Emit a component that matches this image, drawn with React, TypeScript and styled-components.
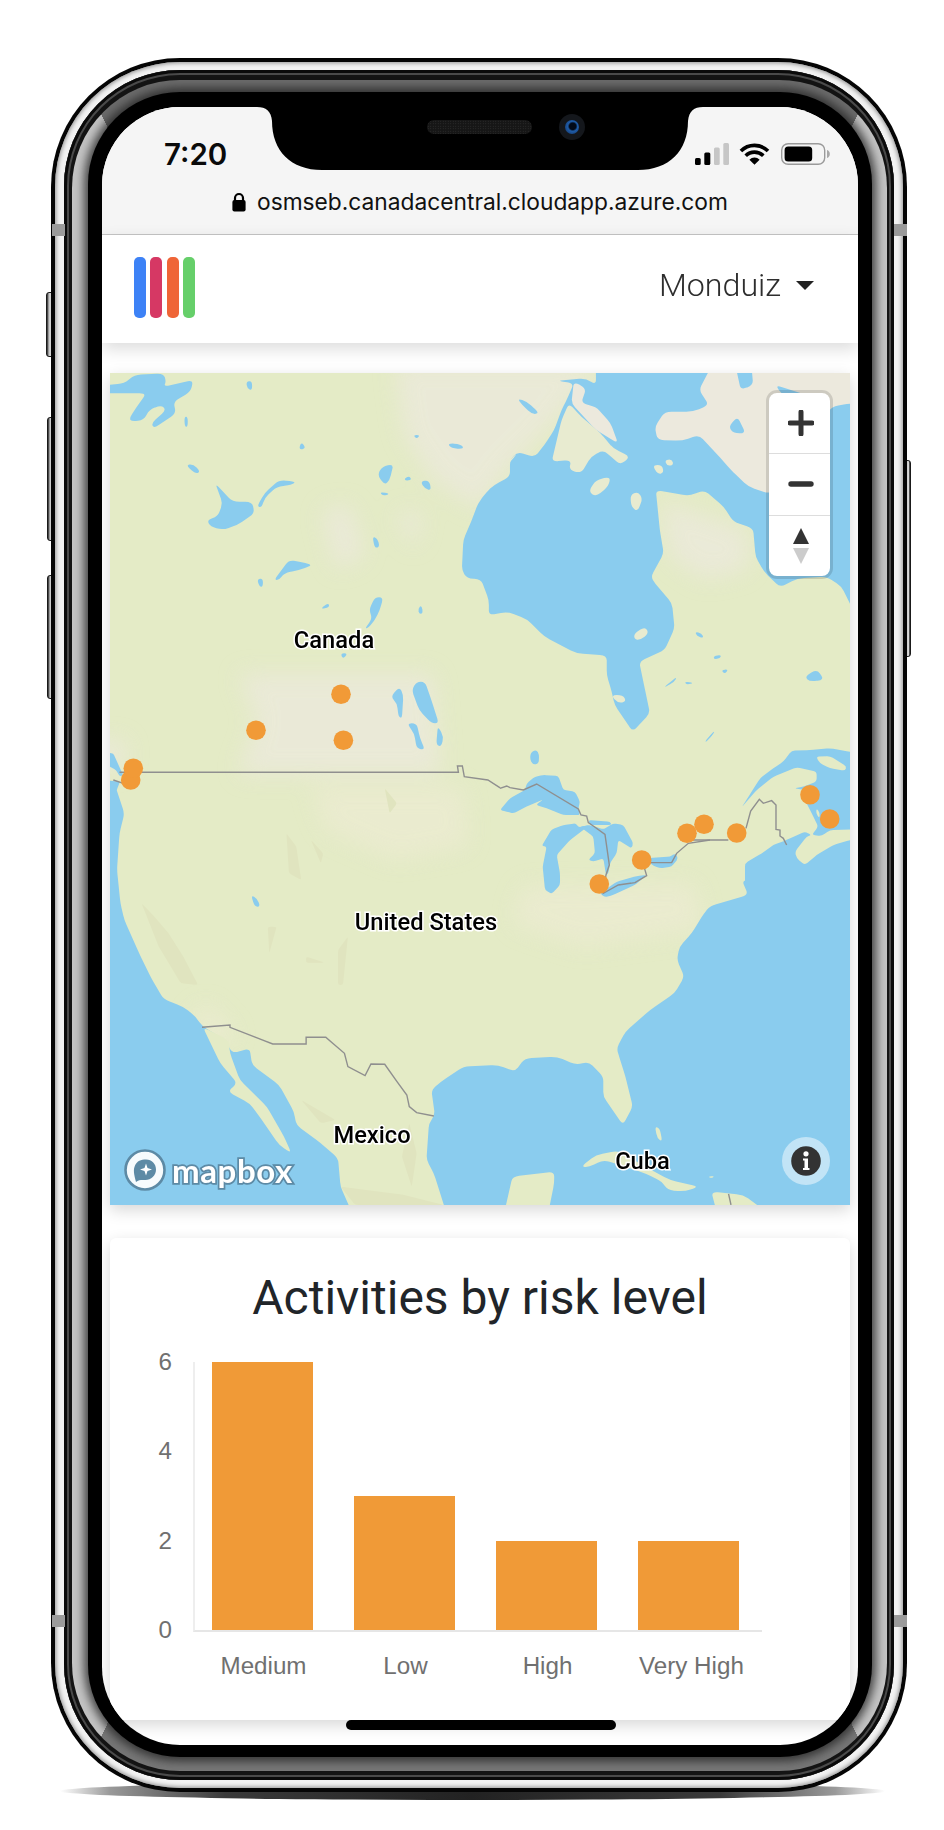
import React from "react";
import styled, { createGlobalStyle } from "styled-components";

const Global = createGlobalStyle`
  * { box-sizing: border-box; }
  html, body { margin: 0; padding: 0; background: #fff; }
  body { font-family: Roboto, "Liberation Sans", sans-serif; }
`;

const Page = styled.div`
  width: 944px;
  height: 1830px;
  padding: 58px 0 0 51px;
  overflow: hidden;
  background: #fff;
`;

const Device = styled.div`
  position: relative;
  width: 856px;
  height: 1734px;
`;

const GroundShadow = styled.div`
  position: absolute;
  left: 9px;
  right: 22px;
  bottom: -8px;
  height: 18px;
  border-radius: 50%;
  background: linear-gradient(90deg, rgba(255, 255, 255, 0) 0%, #9a9a9a 6%, #3a3a3a 20%, #222 50%, #3a3a3a 80%, #9a9a9a 94%, rgba(255, 255, 255, 0) 100%);
`;

const SideButton = styled.div<{ $left: number; $top: number; $w: number; $h: number }>`
  position: absolute;
  left: ${(p) => p.$left}px;
  top: ${(p) => p.$top}px;
  width: ${(p) => p.$w}px;
  height: ${(p) => p.$h}px;
  border-radius: 3px;
  background: linear-gradient(90deg, #222 0%, #c8c8c8 35%, #d8d8d8 70%, #111 100%);
  border: 1px solid #1a1a1a;
`;

const Antenna = styled.div<{ $left: number; $top: number }>`
  position: absolute;
  z-index: 3;
  left: ${(p) => p.$left}px;
  top: ${(p) => p.$top}px;
  width: 13px;
  height: 12px;
  background: #9a9a9a;
`;

const Shell = styled.div`
  position: relative;
  width: 100%;
  height: 100%;
  padding: 3.5px 4px 4px;
  border-radius: 129px;
  background: #050505;
`;

const Silver = styled.div`
  height: 100%;
  padding: 8.5px 9px;
  border-radius: 125px;
  background: #f2f2f2;
  box-shadow: inset 0 0 4px 1px #8f8f8f;
`;

const DarkRing = styled.div`
  height: 100%;
  padding: 10px 7.5px 9px;
  border-radius: 116px;
  background: #141414;
  box-shadow: inset 0 0 0 3px #0a0a0a, inset 0 0 0 5px #4a4a4a;
`;

const Band = styled.div`
  height: 100%;
  padding: 12px 15px 14px 16.5px;
  border-radius: 108px;
  background: conic-gradient(
    #6c6c6c 0deg 25deg,
    #c4c4c4 25deg 155deg,
    #777 155deg 205deg,
    #c4c4c4 205deg 335deg,
    #6c6c6c 335deg 360deg
  );
`;

const Bezel = styled.div`
  height: 100%;
  padding: 15px 13.5px 12px 14px;
  border-radius: 92px;
  background: #000;
  box-shadow: 0 0 10px 4px rgba(35, 35, 35, 0.8);
`;

const Screen = styled.div`
  position: relative;
  height: 100%;
  border-radius: 78px;
  overflow: hidden;
  background: #fff;
`;

const Notch = styled.svg`
  position: absolute;
  z-index: 5;
  left: 155px;
  top: 0;
`;

const Speaker = styled.div`
  position: absolute;
  z-index: 6;
  left: 325px;
  top: 13px;
  width: 105px;
  height: 14px;
  border-radius: 7px;
  background-color: #161616;
  background-image: radial-gradient(#333 0.7px, transparent 0.8px);
  background-size: 2.5px 2.5px;
`;

const Camera = styled.div`
  position: absolute;
  z-index: 6;
  left: 457px;
  top: 7px;
  width: 26px;
  height: 26px;
  border-radius: 50%;
  background: #14171c;
  display: flex;
  align-items: center;
  justify-content: center;
`;

const Lens = styled.div`
  width: 14px;
  height: 14px;
  border-radius: 50%;
  background: radial-gradient(circle at 55% 45%, #020a18 0 30%, #1f5ca8 45%, #12305c 100%);
`;

const HomeBar = styled.div`
  position: absolute;
  z-index: 6;
  left: 244px;
  bottom: 15px;
  width: 270px;
  height: 10px;
  border-radius: 5px;
  background: #000;
`;

const Browser = styled.div`
  height: 128px;
  background: #f5f5f5;
  border-bottom: 1px solid #c6c6c6;
`;

const StatusRow = styled.div`
  height: 64px;
  padding: 30px 28px 0 62px;
  display: flex;
  align-items: center;
  justify-content: space-between;
`;

const Clock = styled.span`
  font-family: Inter, sans-serif;
  font-weight: 600;
  font-size: 29.5px;
  line-height: 34px;
  color: #0a0a0a;
`;

const StatusIcons = styled.div`
  display: flex;
  align-items: center;
  gap: 10.6px;
`;

const UrlRow = styled.div`
  height: 62px;
  display: flex;
  align-items: center;
  padding-left: 130px;
  gap: 11px;
`;

const UrlText = styled.span`
  font-family: Inter, sans-serif;
  font-size: 22.75px;
  font-weight: 400;
  line-height: 28px;
  color: #111;
  white-space: nowrap;
`;

const Navbar = styled.header`
  position: relative;
  z-index: 2;
  height: 108px;
  padding: 0 44px 3px 32px;
  display: flex;
  align-items: center;
  justify-content: space-between;
  background: #fff;
  box-shadow: 0 6px 16px rgba(0, 0, 0, 0.14);
`;

const Logo = styled.div`
  display: flex;
  gap: 4.4px;
`;

const LogoBar = styled.span<{ $c: string }>`
  width: 12px;
  height: 61px;
  border-radius: 5px;
  background: ${(p) => p.$c};
`;

const UserMenu = styled.div`
  display: flex;
  align-items: center;
  gap: 15px;
  padding-bottom: 5px;
  font-weight: 300;
  font-size: 32.2px;
  line-height: 40px;
  color: #2e2e2e;
`;

const Caret = styled.span`
  width: 0;
  height: 0;
  border-left: 9px solid transparent;
  border-right: 9px solid transparent;
  border-top: 9.5px solid #222;
`;

const Main = styled.main`
  padding: 30px 8px 0;
  display: flex;
  flex-direction: column;
  gap: 32.5px;
`;

const MapPanel = styled.section`
  position: relative;
  width: 740px;
  height: 832px;
  background: #e4ebc6;
  box-shadow: 0 5px 15px rgba(0, 0, 0, 0.16);
`;

const MapSvg = styled.svg`
  display: block;
`;

const PlaceLabel = styled.span<{ $x: number; $y: number }>`
  position: absolute;
  left: ${(p) => p.$x}px;
  top: ${(p) => p.$y}px;
  transform: translate(-50%, -50%);
  font-family: Roboto, sans-serif;
  font-weight: 500;
  font-size: 23.7px;
  line-height: 26px;
  color: #000;
  white-space: nowrap;
  -webkit-text-stroke: 3px #fff;
  paint-order: stroke fill;
`;

const ZoomControl = styled.div`
  position: absolute;
  left: 656px;
  top: 17px;
  width: 67px;
  height: 189px;
  display: flex;
  flex-direction: column;
  border: 3.3px solid rgba(0, 0, 0, 0.13);
  border-radius: 11px;
  background: #fff;
  background-clip: padding-box;
`;

const ZoomButton = styled.div<{ $last?: boolean }>`
  flex: 1;
  display: flex;
  align-items: center;
  justify-content: center;
  padding-left: 2px;
  border-bottom: ${(p) => (p.$last ? "none" : "1.5px solid #ddd")};
`;

const Attribution = styled.div`
  position: absolute;
  left: 14px;
  top: 776px;
  display: flex;
  align-items: center;
  gap: 6px;
`;

const Wordmark = styled.span`
  font-family: Lato, sans-serif;
  font-weight: 700;
  font-size: 33px;
  line-height: 40px;
  letter-spacing: 0.6px;
  color: #fff;
  -webkit-text-stroke: 3.5px #5d8aa5;
  paint-order: stroke fill;
`;

const InfoButton = styled.svg`
  position: absolute;
  left: 672px;
  top: 764px;
`;

const ChartCard = styled.section`
  width: 740px;
  height: 482.5px;
  padding-top: 31px;
  border-radius: 6px;
  background: #fff;
  box-shadow: 0 5px 15px rgba(0, 0, 0, 0.16);
`;

const ChartTitle = styled.h2`
  margin: 0 0 36px;
  text-align: center;
  font-family: Roboto, sans-serif;
  font-weight: 400;
  font-size: 48px;
  line-height: 57px;
  color: #212529;
`;

const ChartBody = styled.div`
  display: flex;
  font-family: "Liberation Sans", Arial, sans-serif;
  color: #707070;
  font-size: 24.2px;
`;

const YAxis = styled.div`
  width: 62px;
  height: 268.5px;
  margin-right: 21px;
  display: flex;
  flex-direction: column;
  justify-content: space-between;
  align-items: flex-end;
`;

const YTick = styled.span`
  height: 0;
  display: flex;
  align-items: center;
`;

const PlotColumn = styled.div`
  width: 569px;
`;

const Plot = styled.div`
  height: 270.5px;
  padding-left: 17px;
  display: flex;
  align-items: flex-end;
  gap: 41px;
  border-left: 2px solid #eee;
  border-bottom: 2px solid #e6e6e6;
`;

const Bar = styled.div<{ $value: number }>`
  width: 101px;
  height: ${(p) => p.$value * 44.75}px;
  background: #f09a37;
`;

const XAxis = styled.div`
  margin-top: 20px;
  padding-left: 20px;
  display: flex;
  gap: 41px;
`;

const XTick = styled.span`
  width: 101px;
  line-height: 28px;
  text-align: center;
  white-space: nowrap;
`;

/* ---------- map geometry, written in the coordinates of the measured crops ---------- */

const T = {
  north: "translate(-20,-3) scale(.4912,.3333)",
  south: "translate(-20,417) scale(.4912,.3333)",
  east: "translate(580,357) scale(.3333)",
  lakes: "translate(390,367) scale(.3333)",
  coast: "translate(-10,367) scale(.3333)",
};

const WATER = "#8accee";
const LAND = "#e4ebc6";
const BEIGE = "#ece9dd";

const beigeNorth = [
  "620,-20 1040,-20 950,150 850,300 790,420 700,330 640,200",
  "300,910 700,910 715,1215 300,1215 340,1050",
  "1160,390 1340,480 1340,600 1250,630 1180,560",
  "1300,-40 1600,-40 1600,100 1380,300 1280,200",
  "0,1110 75,1110 70,1200 0,1200",
  "470,420 530,400 560,560 500,600",
  "620,420 680,430 660,540",
];
const beigeSouth = [
  "450,-10 760,-10 770,170 620,210 480,120",
  "880,290 1230,280 1250,420 1000,470 860,400",
  "240,640 300,740 250,780 200,680",
];
const ridges = [
  "105,340 125,370 160,430 190,500 220,585 185,580 140,470",
  "400,130 420,170 430,270 405,250",
  "450,150 475,190 470,220",
  "362,410 380,410 365,490",
  "505,480 525,440 515,585 505,585",
  "440,500 478,518 440,518",
  "600,-5 625,40 610,70",
  "650,1000 665,1090 655,1190 635,1100",
  "430,930 500,990 470,1000",
  "510,1190 640,1215 720,1245 540,1245",
];

const waterNorth = [
  "1030,-40 1600,-40 1600,740 1560,740 1530,650 1500,620 1440,625 1405,652 1372,605 1355,560 1350,475 1310,455 1290,410 1250,360 1220,378 1152,360 1160,480 1168,550 1142,620 1150,640 1185,700 1190,775 1170,840 1118,875 1130,960 1140,1030 1105,1085 1068,1005 1062,965 1052,915 1052,857 990,850 925,800 890,748 850,725 812,736 812,690 796,628 767,625 757,600 760,510 780,440 790,400 805,370 822,345 855,320 855,270 870,245 905,262 925,225 945,180 960,120 972,85 985,40 950,32 1010,25 1030,45",
  "0,50 70,40 90,15 150,10 155,35 150,50 210,30 205,65 170,95 175,130 130,175 125,160 155,120 145,105 120,120 110,150 85,155 80,145 100,100 115,70 60,70 0,70",
  "192,140 199,140 199,170 193,170",
  "318,35 330,33 330,62 320,55",
  "255,340 290,395 330,395 335,430 300,465 270,480 245,470 238,450 260,440 270,400",
  "340,410 355,370 385,330 420,335 410,345 380,350 355,385 350,412",
  "375,630 405,570 425,575 455,585 425,600 395,610 385,630",
  "340,628 352,625 352,650 345,650",
  "195,285 210,282 225,305 215,312",
  "585,315 595,290 618,282 610,330 600,345",
  "640,325 650,318 655,330 642,332",
  "672,335 690,330 695,360 683,358",
  "590,365 612,372 595,378",
  "575,500 585,505 590,530 580,535",
  "430,215 440,235 425,240",
  "658,195 672,195 665,207",
  "728,220 755,222 762,237 735,235",
  "568,720 580,682 597,682 590,720 578,755 565,775 560,775 575,745",
  "468,718 485,698 488,712",
  "668,715 675,705 678,730 670,732",
  "510,850 525,850 515,868",
  "655,960 665,935 682,935 695,990 710,1060 695,1060 670,1020",
  "612,980 630,950 638,975 635,1045 628,1040 625,1000",
  "645,1060 665,1060 672,1105 682,1140 665,1135 660,1090",
  "708,1068 720,1100 715,1130 705,1125",
  "895,1150 908,1140 915,1180 900,1185",
  "1232,785 1245,790 1250,805 1235,798",
  "1270,858 1285,855 1283,865 1270,868",
  "1285,900 1300,898 1292,912",
  "1170,950 1195,920 1190,935 1172,950",
  "1210,935 1230,938 1215,945",
  "1455,920 1480,898 1495,930 1465,935",
  "1252,1115 1272,1082 1265,1100",
  "0,1145 60,1175 0,1190",
];

const landNorth = [
  "940,275 960,150 975,100 1000,140 1040,190 1065,235 1100,260 1080,285 1045,240 1020,260 1000,310 975,300 980,270",
  "1015,365 1030,330 1060,320 1055,350 1030,380",
  "1100,375 1115,365 1125,385 1115,425 1102,410",
  "1145,285 1165,285 1168,310 1155,312",
  "1170,270 1185,268 1188,285 1175,288",
  "1060,975 1085,975 1092,995 1075,1000",
  "1108,790 1130,770 1138,790 1120,810 1108,808",
  "860,260 850,285 870,250",
];
const landNorthBeige = [
  "1275,-40 1240,60 1260,105 1228,125 1170,125 1150,170 1155,210 1205,212 1240,195 1275,250 1305,300 1340,350 1385,372 1420,250 1480,180 1510,110 1548,100 1600,100 1600,-40",
  "985,35 1010,55 1000,100 1030,110 1060,160 1075,220 1030,180 980,100",
];
const inletsNorth = [
  "1310,-40 1345,-40 1350,45 1325,60",
  "1395,45 1470,80 1440,90 1410,75",
  "1300,170 1318,140 1335,190 1310,190",
  "870,85 890,95 915,130 900,133 880,105",
];

const waterSouth = [
  "-20,-10 52,-10 70,70 60,130 55,240 62,340 70,390 100,490 125,565 150,628 190,650 215,680 228,708 275,750 290,790 325,775 330,825 385,885 415,965 420,1005 470,1060 505,1105 510,1190 540,1290 -20,1290",
  "730,1290 700,1150 685,1110 690,1000 702,975 695,900 715,875 760,830 830,825 865,845 885,805 950,800 990,825 1015,815 1045,860 1045,920 1085,1005 1105,950 1090,860 1072,775 1090,725 1140,660 1190,610 1210,560 1195,510 1200,470 1225,430 1250,370 1262,348 1340,315 1327,270 1600,270 1600,1290",
  "328,315 340,325 347,350 335,350",
];
const landSouth = [
  "230,712 282,750 285,790 305,870 360,950 395,1040 410,1090 385,1065 350,990 325,940 280,905 300,880 265,820",
  "1150,1010 1160,1015 1165,1055 1155,1045",
  "1000,1130 1030,1095 1075,1082 1130,1130 1180,1170 1240,1190 1210,1205 1175,1200 1165,1175 1130,1150 1090,1130 1045,1110 1015,1132",
  "860,1160 945,1145 945,1180 930,1290 840,1290",
  "1265,1205 1330,1215 1400,1290 1280,1290",
  "1258,1160 1272,1158 1265,1165",
];
const waterEast = [
  "155,232 185,185 210,145 250,115 280,95 305,62 360,60 420,55 480,65 600,65 600,295 420,300 395,318 365,315 385,290 365,250 340,200 345,180 312,175 340,170 380,155 380,125 320,112 250,140 200,180",
  "165,470 165,400 215,370 250,345 290,330 345,305 365,315 350,320 315,365 320,385 345,405 380,375 430,345 480,330 600,330 600,470",
  "45,35 70,5 74,5 50,35",
];
const landEast = [
  "378,80 420,78 470,110 465,122 420,115 390,100",
  "380,235 390,250 388,265 378,250",
];
const lakes = [
  "0,210 30,175 75,150 80,130 105,110 130,105 175,108 190,150 225,155 240,185 235,205 240,225 190,225 140,205 108,195 130,178 80,200 40,220 20,215",
  "90,60 95,35 110,30 118,45 115,70 100,72",
  "125,318 155,268 190,255 228,250 235,262 270,255 210,300 170,345 180,400 180,435 155,462 135,450 128,380 140,320",
  "270,255 310,268 340,250 370,255 400,310 395,325 355,300 350,340 330,370 325,400 318,405 310,355 280,365 265,360 285,340 280,290 240,260",
  "265,240 330,245 335,255 270,255",
  "300,460 350,425 410,408 440,405 405,435 340,465 315,472",
  "440,355 510,350 525,340 535,355 515,380 480,385 455,375",
];
const coastWater = [
  "10,38 40,40 60,85 70,105 60,110 48,90 10,70",
  "10,120 60,125 50,150 45,180 10,180",
];

const borders: [string, string][] = [
  [T.north, "60,1207 750,1207 748,1188 758,1188 762,1220 810,1230 835,1254"],
  [T.lakes, "0,145 20,138 30,143 70,150 110,132 235,207 243,225 260,228 265,248 280,258 315,283 328,375 318,405 310,460 355,435 405,428 440,407 432,380 450,368 515,368 530,340 565,310 630,300"],
  [T.east, "0,330 115,330"],
  [T.east, "168,295 182,243 208,208 220,220 245,212 258,225 258,298 270,300 270,318 280,325 290,345"],
  [T.south, "228,712 285,705 285,712 372,762 440,762 440,742 480,742 518,790 525,830 560,857 572,822 600,823 625,875 645,915 650,950 665,968 700,978"],
  [T.south, "1300,1212 1305,1245"],
  [T.coast, "40,120 70,130"],
];

/* page-coordinates of the activity markers */
const pins: [number, number][] = [
  [341, 694.3],
  [256, 730.3],
  [343.4, 740.3],
  [130.7, 780],
  [133.3, 768.3],
  [599.3, 884],
  [641.7, 860],
  [687, 833.3],
  [704, 824.3],
  [736.7, 833],
  [810, 794.7],
  [829.7, 819],
];

/* rounds every corner of a polygon with a short quadratic, so coasts read as coasts */
const smooth = (points: string, r = 14): string => {
  const p = points.trim().split(/\s+/).map((s) => s.split(",").map(Number));
  const n = p.length;
  const toward = (a: number[], b: number[]) => {
    const d = Math.hypot(b[0] - a[0], b[1] - a[1]) || 1;
    const k = Math.min(r, d / 2) / d;
    return [a[0] + (b[0] - a[0]) * k, a[1] + (b[1] - a[1]) * k];
  };
  let d = "";
  for (let i = 0; i < n; i++) {
    const c = p[i];
    const a = toward(c, p[(i + n - 1) % n]);
    const b = toward(c, p[(i + 1) % n]);
    d += `${i === 0 ? "M" : "L"}${a[0].toFixed(1)} ${a[1].toFixed(1)}Q${c[0]} ${c[1]} ${b[0].toFixed(1)} ${b[1].toFixed(1)}`;
  }
  return d + "Z";
};

const Polys = ({ items, fill, transform, r }: { items: string[]; fill: string; transform: string; r?: number }) => (
  <g transform={transform} fill={fill}>
    {items.map((p, i) => (
      <path key={i} d={smooth(p, r)} />
    ))}
  </g>
);

const GeoMap = () => (
  <MapSvg width={740} height={832} viewBox="0 0 740 832">
    <defs>
      <filter id="soft" x="-30%" y="-30%" width="160%" height="160%">
        <feGaussianBlur stdDeviation="11" />
      </filter>
      <clipPath id="frame">
        <rect width="740" height="832" />
      </clipPath>
    </defs>
    <g clipPath="url(#frame)">
      <rect width="740" height="832" fill={LAND} />
      <g filter="url(#soft)" opacity={0.75}>
        <Polys items={beigeNorth} fill={BEIGE} transform={T.north} />
        <Polys items={beigeSouth} fill="#ecebd2" transform={T.south} />
      </g>
      <Polys items={ridges} fill="#e0e4bf" transform={T.south} r={6} />
      <Polys items={waterNorth} fill={WATER} transform={T.north} />
      <Polys items={landNorth} fill="#e8ebd0" transform={T.north} />
      <Polys items={landNorthBeige} fill={BEIGE} transform={T.north} />
      <Polys items={inletsNorth} fill={WATER} transform={T.north} />
      <Polys items={waterSouth} fill={WATER} transform={T.south} />
      <Polys items={landSouth} fill={LAND} transform={T.south} />
      <Polys items={waterEast} fill={WATER} transform={T.east} r={10} />
      <Polys items={landEast} fill={LAND} transform={T.east} r={10} />
      <Polys items={lakes} fill={WATER} transform={T.lakes} r={8} />
      <Polys items={coastWater} fill={WATER} transform={T.coast} r={6} />
      {borders.map(([t, p], i) => (
        <g key={i} transform={t}>
          <polyline points={p} fill="none" stroke="#8f8f8f" strokeWidth={1.4} vectorEffect="non-scaling-stroke" />
        </g>
      ))}
      {pins.map(([x, y], i) => (
        <circle key={i} cx={x - 110} cy={y - 373} r={9.8} fill="#f19a37" />
      ))}
    </g>
  </MapSvg>
);

const SignalIcon = () => (
  <svg width={34} height={22} viewBox="0 0 34 22">
    <rect x="0" y="15" width="5.7" height="7" rx="1.5" fill="#000" />
    <rect x="9.3" y="9.5" width="6" height="12.5" rx="1.5" fill="#000" />
    <rect x="19" y="4.5" width="5.7" height="17.5" rx="1.5" fill="#c6c6c6" />
    <rect x="28.3" y="0" width="5.7" height="22" rx="1.5" fill="#c6c6c6" />
  </svg>
);

const WifiIcon = () => (
  <svg width={31} height={22} viewBox="0 0 31 22">
    <path d="M1.9 8.1A19 19 0 0 1 29 8.1" fill="none" stroke="#000" strokeWidth={3.6} />
    <path d="M6.7 12.7A12.5 12.5 0 0 1 24.3 12.7" fill="none" stroke="#000" strokeWidth={3.6} />
    <path d="M15.5 21.8L10.4 16.7A7.2 7.2 0 0 1 20.6 16.7Z" fill="#000" />
  </svg>
);

const BatteryIcon = () => (
  <svg width={49} height={22} viewBox="0 0 49 22">
    <rect x="0.7" y="0.7" width="43" height="20.6" rx="6.5" fill="none" stroke="#9a9a9a" strokeWidth={1.4} />
    <rect x="3.6" y="3.5" width="27.6" height="15" rx="3.5" fill="#000" />
    <path d="M46 7c1.8.5 2.8 2 2.8 4s-1 3.5-2.8 4z" fill="#a8a8a8" />
  </svg>
);

const LockIcon = () => (
  <svg width={14} height={20} viewBox="0 0 14 20">
    <path d="M3 9V6a4 4 0 0 1 8 0v3" fill="none" stroke="#000" strokeWidth={2.2} />
    <rect x="0.4" y="8" width="13.2" height="11.5" rx="2" fill="#000" />
  </svg>
);

const PlusIcon = () => (
  <svg width={26} height={26} viewBox="0 0 26 26">
    <path d="M2 13H24M13 2V24" stroke="#333" strokeWidth={5} strokeLinecap="round" />
  </svg>
);

const MinusIcon = () => (
  <svg width={26} height={8} viewBox="0 0 26 8">
    <path d="M3 4H23" stroke="#333" strokeWidth={5.4} strokeLinecap="round" />
  </svg>
);

const CompassIcon = () => (
  <svg width={16} height={36} viewBox="0 0 16 36">
    <path d="M8 0L16 16H0Z" fill="#333" />
    <path d="M0 20H16L8 36Z" fill="#ccc" />
  </svg>
);

const MapboxMark = () => (
  <svg width={42} height={42} viewBox="0 0 42 42">
    <circle cx="21" cy="21" r="19.5" fill="#f7fbfd" stroke="#5d8aa5" strokeWidth={2.6} />
    <path d="M12 33C10 25 9 21 11 16.5 13 12 17 10.5 22 10.5 28 10.5 32 15 32 20.500 32 26.500 27 31 21.500 31 18 31 15 30.500 12 33Z" fill="#5d8aa5" />
    <path d="M22 14.500L23.500 19 28 20.500 23.500 22 22 26.500 20.500 22 16 20.500 20.500 19Z" fill="#fff" />
  </svg>
);

const InfoIcon = () => (
  <InfoButton width={48} height={48} viewBox="0 0 48 48">
    <circle cx="24" cy="24" r="24" fill="#fff" fillOpacity={0.48} />
    <circle cx="24" cy="24" r="14.8" fill="#333" />
    <circle cx="24" cy="16.8" r="2.6" fill="#fff" />
    <path d="M21 21.500H26V31H27.500V33H21V31H22.500V23.500H21Z" fill="#fff" />
  </InfoButton>
);

const bars = [
  { label: "Medium", value: 6 },
  { label: "Low", value: 3 },
  { label: "High", value: 2 },
  { label: "Very High", value: 2 },
];

const logoColours = ["#3d82f6", "#d63864", "#ef6537", "#66cf6a"];

export default function App() {
  return (
    <Page>
      <Global />
      <Device>
        <GroundShadow />
        <SideButton $left={-5.5} $top={233.7} $w={8} $h={65.5} />
        <SideButton $left={-4} $top={358.7} $w={7.5} $h={124} />
        <SideButton $left={-4} $top={517} $w={7.5} $h={124} />
        <SideButton $left={853} $top={402} $w={7} $h={197} />
        <Shell>
          <Silver>
            <DarkRing>
              <Band>
                <Bezel>
                  <Screen>
                    <Notch width={446} height={64} viewBox="0 0 446 64">
                      <path d="M0 0H446C437 0 432 4 431 14 431 44 412 63 381 63H65C34 63 15 44 15 14 14 4 9 0 0 0Z" fill="#000" />
                    </Notch>
                    <Speaker />
                    <Camera>
                      <Lens />
                    </Camera>
                    <HomeBar />
                    <Browser>
                      <StatusRow>
                        <Clock>7:20</Clock>
                        <StatusIcons>
                          <SignalIcon />
                          <WifiIcon />
                          <BatteryIcon />
                        </StatusIcons>
                      </StatusRow>
                      <UrlRow>
                        <LockIcon />
                        <UrlText>osmseb.canadacentral.cloudapp.azure.com</UrlText>
                      </UrlRow>
                    </Browser>
                    <Navbar>
                      <Logo>
                        {logoColours.map((c) => (
                          <LogoBar key={c} $c={c} />
                        ))}
                      </Logo>
                      <UserMenu>
                        Monduiz
                        <Caret />
                      </UserMenu>
                    </Navbar>
                    <Main>
                      <MapPanel>
                        <GeoMap />
                        <PlaceLabel $x={224} $y={267}>Canada</PlaceLabel>
                        <PlaceLabel $x={316} $y={549}>United States</PlaceLabel>
                        <PlaceLabel $x={262} $y={762}>Mexico</PlaceLabel>
                        <PlaceLabel $x={532.5} $y={788}>Cuba</PlaceLabel>
                        <ZoomControl>
                          <ZoomButton>
                            <PlusIcon />
                          </ZoomButton>
                          <ZoomButton>
                            <MinusIcon />
                          </ZoomButton>
                          <ZoomButton $last>
                            <CompassIcon />
                          </ZoomButton>
                        </ZoomControl>
                        <Attribution>
                          <MapboxMark />
                          <Wordmark>mapbox</Wordmark>
                        </Attribution>
                        <InfoIcon />
                      </MapPanel>
                      <ChartCard>
                        <ChartTitle>Activities by risk level</ChartTitle>
                        <ChartBody>
                          <YAxis>
                            {[6, 4, 2, 0].map((n) => (
                              <YTick key={n}>{n}</YTick>
                            ))}
                          </YAxis>
                          <PlotColumn>
                            <Plot>
                              {bars.map((b) => (
                                <Bar key={b.label} $value={b.value} />
                              ))}
                            </Plot>
                            <XAxis>
                              {bars.map((b) => (
                                <XTick key={b.label}>{b.label}</XTick>
                              ))}
                            </XAxis>
                          </PlotColumn>
                        </ChartBody>
                      </ChartCard>
                    </Main>
                  </Screen>
                </Bezel>
              </Band>
            </DarkRing>
          </Silver>
          <Antenna $left={1} $top={166} />
          <Antenna $left={843} $top={166} />
          <Antenna $left={1} $top={1557} />
          <Antenna $left={843} $top={1557} />
        </Shell>
      </Device>
    </Page>
  );
}
